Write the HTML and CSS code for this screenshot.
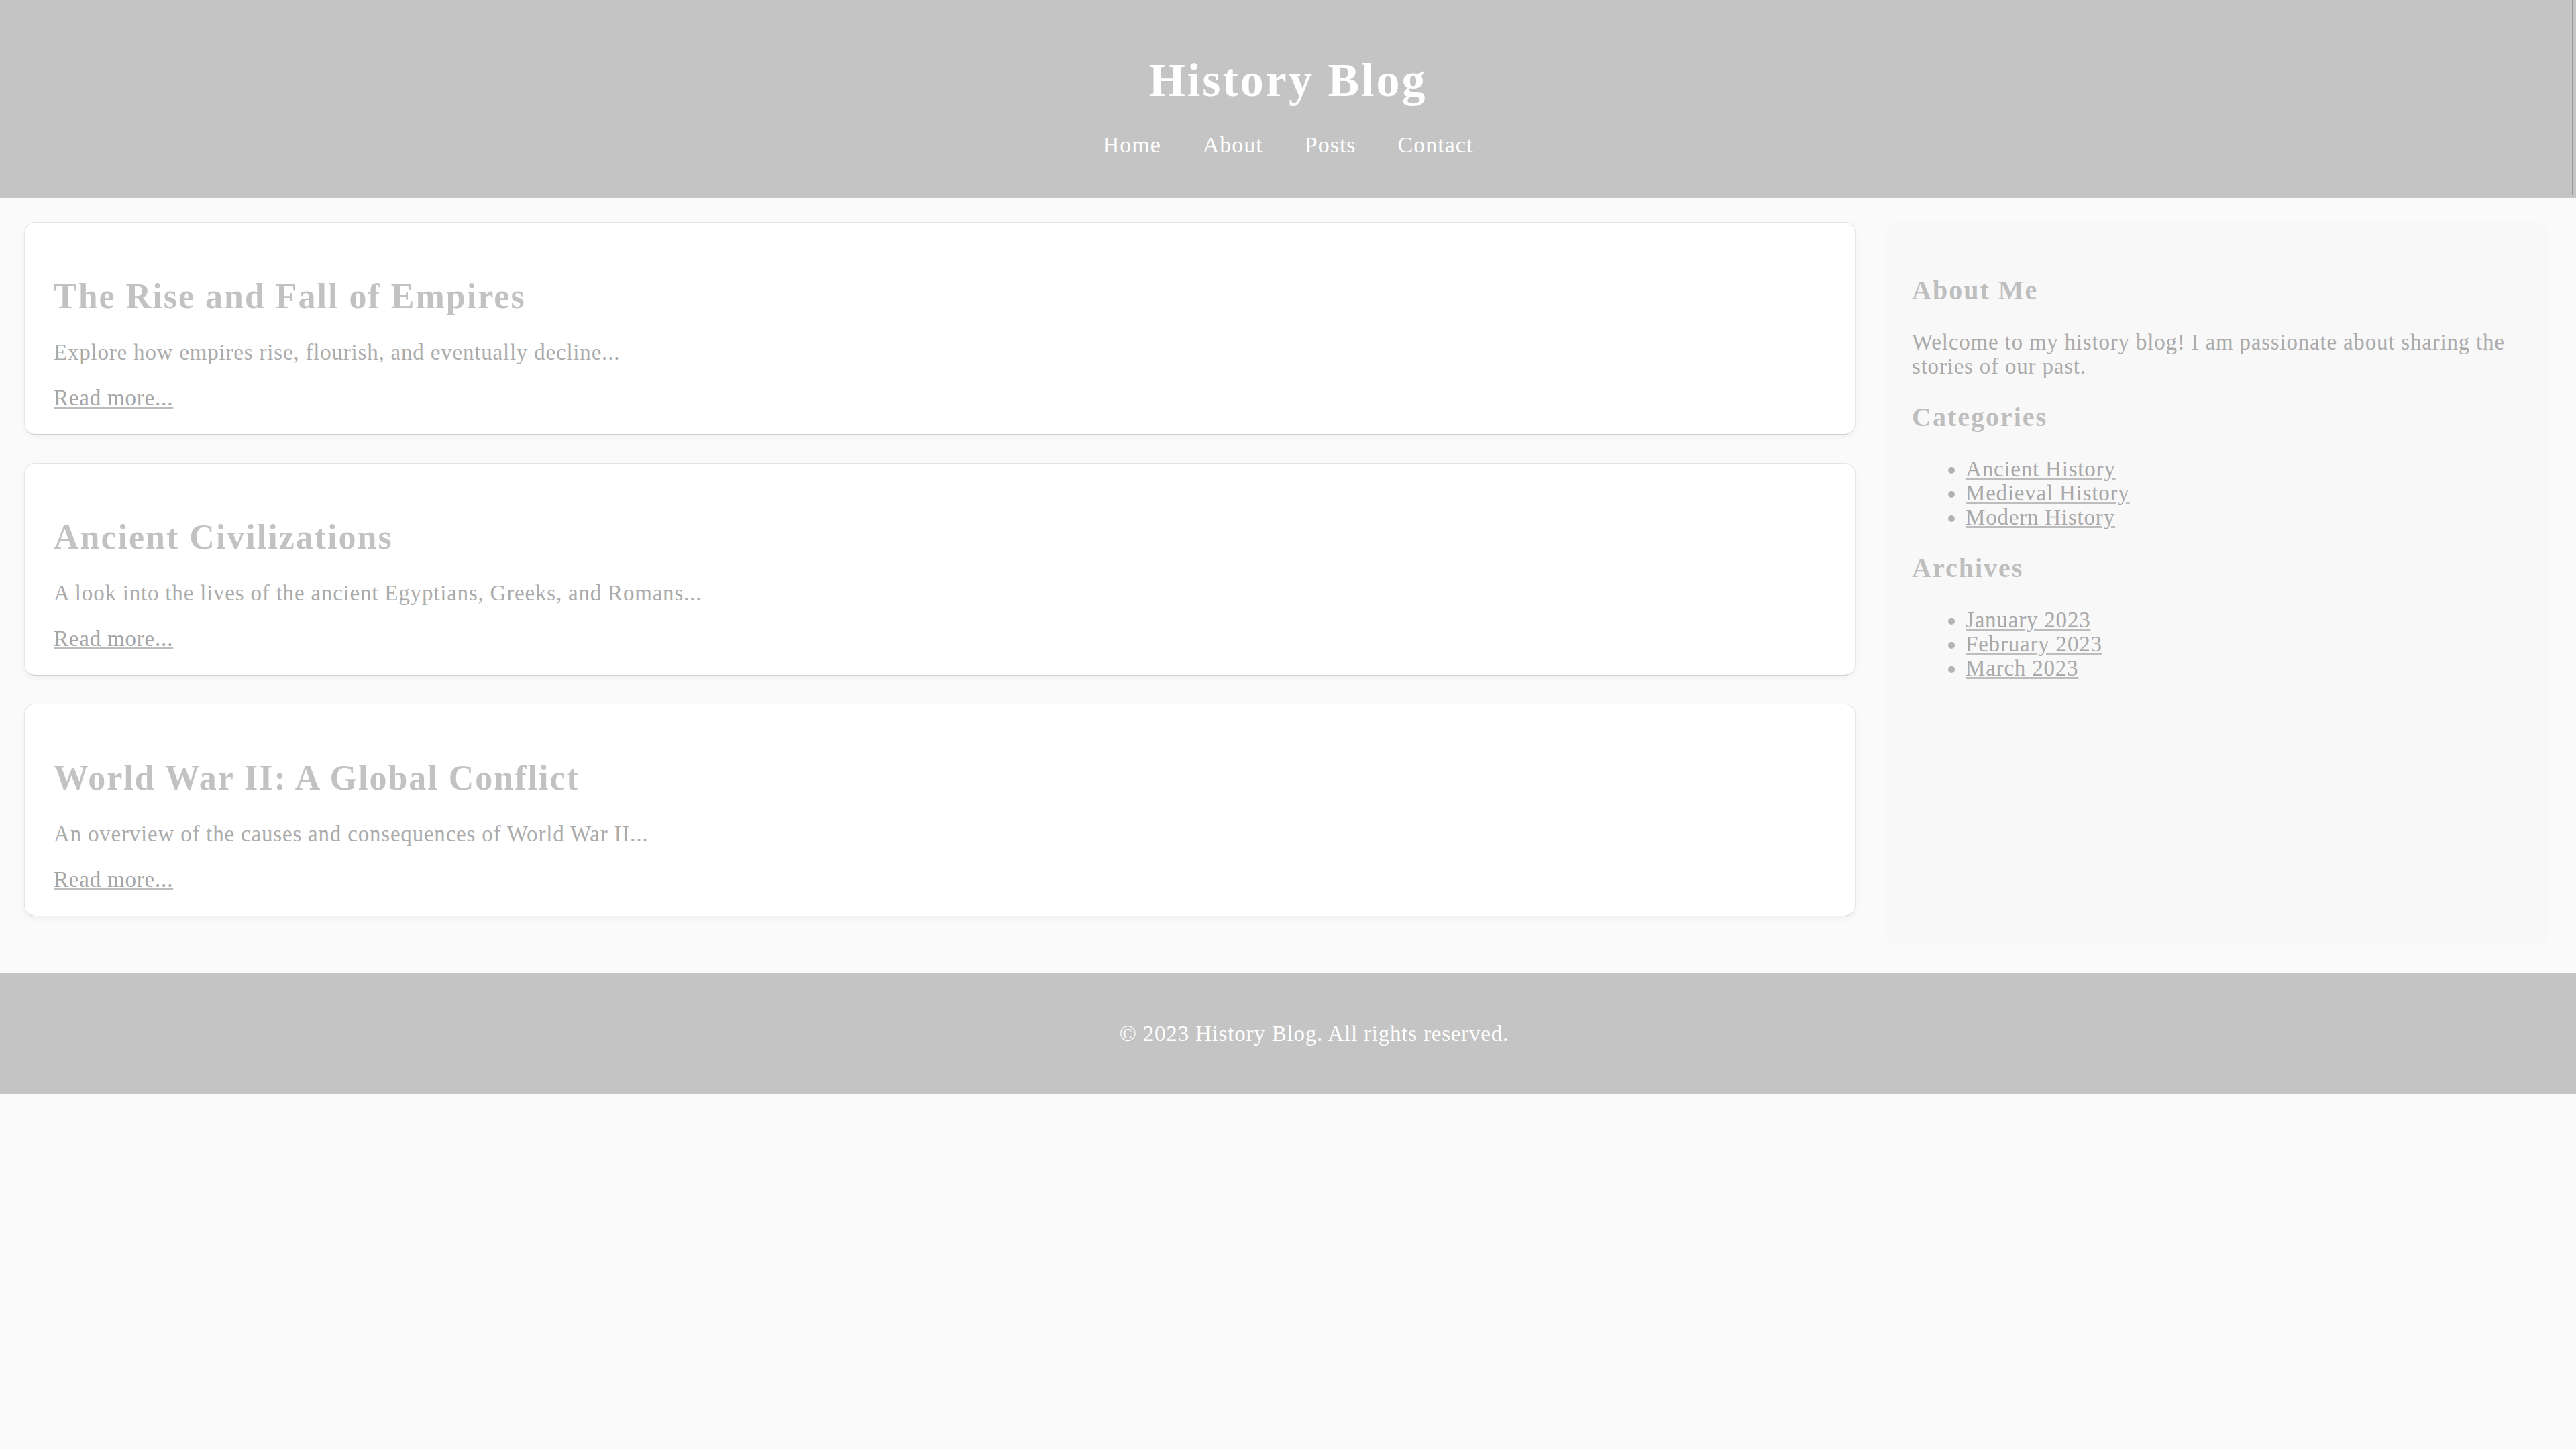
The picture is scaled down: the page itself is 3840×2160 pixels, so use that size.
FILE: index.html
```html
<!DOCTYPE html>
<html lang="en">
<head>
<meta charset="utf-8">
<title>History Blog</title>
<link rel="stylesheet" href="styles.css">
</head>
<body>
<header class="site-header">
  <h1 class="site-title">History Blog</h1>
  <nav class="site-nav">
    <a href="#">Home</a>
    <a href="#">About</a>
    <a href="#">Posts</a>
    <a href="#">Contact</a>
  </nav>
</header>
<main class="layout">
  <section class="posts">
    <article class="post">
      <h2 class="post-title">The Rise and Fall of Empires</h2>
      <p class="post-excerpt">Explore how empires rise, flourish, and eventually decline...</p>
      <a class="post-link" href="#">Read more...</a>
    </article>
    <article class="post">
      <h2 class="post-title">Ancient Civilizations</h2>
      <p class="post-excerpt">A look into the lives of the ancient Egyptians, Greeks, and Romans...</p>
      <a class="post-link" href="#">Read more...</a>
    </article>
    <article class="post">
      <h2 class="post-title">World War II: A Global Conflict</h2>
      <p class="post-excerpt">An overview of the causes and consequences of World War II...</p>
      <a class="post-link" href="#">Read more...</a>
    </article>
  </section>
  <aside class="sidebar">
    <h3 class="side-title">About Me</h3>
    <p class="side-text">Welcome to my history blog! I am passionate about sharing the stories of our past.</p>
    <h3 class="side-title">Categories</h3>
    <ul class="side-list">
      <li><a href="#">Ancient History</a></li>
      <li><a href="#">Medieval History</a></li>
      <li><a href="#">Modern History</a></li>
    </ul>
    <h3 class="side-title">Archives</h3>
    <ul class="side-list">
      <li><a href="#">January 2023</a></li>
      <li><a href="#">February 2023</a></li>
      <li><a href="#">March 2023</a></li>
    </ul>
  </aside>
</main>
<footer class="site-footer">
  <p class="footer-text">&copy; 2023 History Blog. All rights reserved.</p>
</footer>
</body>
</html>
```
FILE: styles.css
```css
html, body {
  margin: 0;
  padding: 0;
}
body {
  background: #fafafa;
  font-family: "Liberation Serif", "DejaVu Serif", serif;
  font-size: 33px;
  color: #a9a9a9;
}
.site-header {
  position: relative;
  background: #c4c4c4;
  color: #ffffff;
  text-align: center;
  padding: 40px 0 61px;
}
.site-header::after {
  content: "";
  position: absolute;
  right: 4px;
  top: 0;
  bottom: 5px;
  width: 2px;
  background: #9a9a9a;
}
.site-title {
  margin: 43px 0 42px;
  font-size: 70px;
  line-height: 73px;
  font-weight: bold;
  letter-spacing: 3px;
}
.site-nav {
  display: flex;
  justify-content: center;
  gap: 62px;
  font-size: 34px;
  line-height: 36px;
}
.site-nav a {
  color: #ffffff;
  text-decoration: none;
  letter-spacing: 1px;
}
.layout {
  display: flex;
  align-items: stretch;
  gap: 46px;
  padding: 36px 40px 43px 36px;
}
.posts {
  flex: 1;
  display: flex;
  flex-direction: column;
}
.post {
  background: #ffffff;
  border: 1px solid #e4e4e4;
  border-bottom-color: #cfcfcf;
  border-radius: 16px;
  box-shadow: 0 4px 10px rgba(0, 0, 0, 0.04);
  padding: 40px 40px 37px 43px;
  margin-bottom: 42px;
  line-height: 34px;
}
.post-title {
  margin: 44px 0 40px;
  font-size: 52px;
  line-height: 52px;
  font-weight: bold;
  color: #c2c2c2;
  letter-spacing: 2px;
}
.post-excerpt {
  margin: 0 0 34px;
  line-height: 34px;
  color: #ababab;
  letter-spacing: 0.8px;
}
.post-link {
  color: #a6a6a6;
  text-decoration: underline;
  text-decoration-color: #bdbdbd;
  letter-spacing: 0.8px;
}
.sidebar {
  width: 910px;
  background: #f8f8f8;
  border-radius: 16px;
  padding: 44px 40px 40px 38px;
  flex-shrink: 0;
}
.side-title {
  margin: 36px 0 38px;
  font-size: 40px;
  line-height: 43px;
  font-weight: bold;
  color: #bebebe;
  letter-spacing: 2px;
}
.side-text {
  margin: 0;
  line-height: 36px;
  color: #ababab;
  letter-spacing: 0.8px;
}
.side-list {
  margin: 0;
  padding-left: 80px;
  line-height: 36px;
  color: #b3b3b3;
}
.side-list a {
  color: #a8a8a8;
  text-decoration-color: #bdbdbd;
  letter-spacing: 0.8px;
}
.site-footer {
  background: #c4c4c4;
  color: #ffffff;
  text-align: center;
  padding: 40px 0 40px 78px;
}
.footer-text {
  margin: 32px 0;
  line-height: 36px;
  letter-spacing: 0.8px;
}
```
